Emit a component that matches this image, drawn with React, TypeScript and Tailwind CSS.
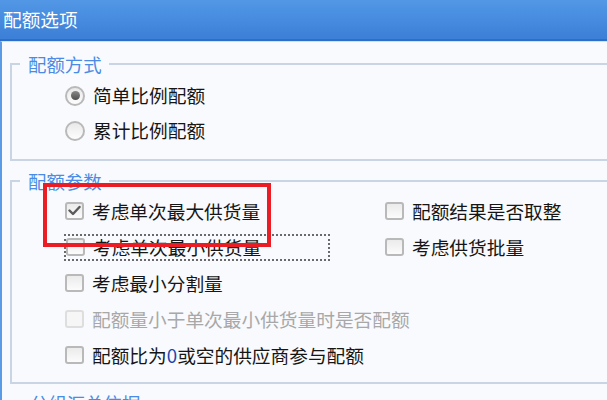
import React from "react";

const FONT = { fontFamily: '"Microsoft YaHei", "Noto Sans CJK SC", "Noto Sans", sans-serif' };

function Radio({ checked }: { checked?: boolean }) {
  return (
    <span className="flex h-[20px] w-[20px] shrink-0 items-center justify-center rounded-full border-2 border-[#b9b9b9] bg-gradient-to-b from-[#e9e9e9] to-[#fdfdfd]">
      {checked && (
        <span className="h-[9px] w-[9px] rounded-full bg-gradient-to-b from-[#8a8a8a] to-[#4f4f4f]" />
      )}
    </span>
  );
}

function Check({ checked, disabled }: { checked?: boolean; disabled?: boolean }) {
  return (
    <span
      className={
        disabled
          ? "flex h-[18px] w-[19px] shrink-0 items-center justify-center rounded-[3px] border-2 border-[#dedede] bg-[#f6f6f6]"
          : "flex h-[18px] w-[19px] shrink-0 items-center justify-center rounded-[3px] border-2 border-[#b9b9b9] bg-gradient-to-b from-[#ebebeb] to-[#fbfbfb]"
      }
    >
      {checked && (
        <svg width="13" height="11" viewBox="0 0 13 11">
          <path d="M1.5 5.5 L5 9 L11.5 2" fill="none" stroke="#5a5a5a" strokeWidth="2.4" strokeLinecap="round" strokeLinejoin="round" />
        </svg>
      )}
    </span>
  );
}

function Item({
  label,
  checked,
  disabled,
  radio,
}: {
  label: React.ReactNode;
  checked?: boolean;
  disabled?: boolean;
  radio?: boolean;
}) {
  return (
    <div className="flex items-center gap-[8px]">
      {radio ? <Radio checked={checked} /> : <Check checked={checked} disabled={disabled} />}
      <span className={disabled ? "text-[18.7px] leading-none text-[#a8a8a8]" : "text-[18.7px] leading-none text-[#161616]"}>
        {label}
      </span>
    </div>
  );
}

function Legend({ children }: { children: React.ReactNode }) {
  return (
    <legend className="ml-[8px] pl-[8px] pr-[7px] text-[18.4px] leading-[20px] text-[#4a8be6]">{children}</legend>
  );
}

export default function App() {
  return (
    <div className="relative h-[400px] w-[607px] overflow-hidden bg-[#f8fafd]" style={FONT}>
      <div className="flex h-[41px] items-center border-b-2 border-[#2c6fca] bg-gradient-to-b from-[#5298e6] to-[#3b7fd7] pl-[3px]">
        <span className="text-[18.7px] leading-none text-white">配额选项</span>
      </div>
      <div className="flex flex-col border-l-2 border-t border-[#5b9be6] border-t-[#cfe0f5] pl-[8px]">
        <fieldset className="mt-[12px] w-[640px] border-2 border-[#c9d5e4] pb-[11px] pt-[4px]">
          <Legend>配额方式</Legend>
          <div className="pl-[53px]">
            <div className="flex h-[35px] items-center">
              <Item radio checked label="简单比例配额" />
            </div>
            <div className="flex h-[35px] items-center">
              <Item radio label="累计比例配额" />
            </div>
          </div>
        </fieldset>
        <fieldset className="mt-[10px] w-[640px] border-2 border-[#c9d5e4] pb-[9px] pt-[2px]">
          <Legend>配额参数</Legend>
          <div className="pl-[52px]">
            <div className="grid grid-cols-[321px_1fr]">
              <div className="flex h-[36px] items-center pl-[1px]">
                <Item checked label="考虑单次最大供货量" />
              </div>
              <div className="flex h-[36px] items-center">
                <Item label="配额结果是否取整" />
              </div>
              <div className="flex h-[36px] items-center">
                <div className="flex h-[27px] w-[266px] items-center border-2 border-dotted border-[#6a6a6a]">
                  <Item label="考虑单次最小供货量" />
                </div>
              </div>
              <div className="flex h-[36px] items-center">
                <Item label="考虑供货批量" />
              </div>
            </div>
            <div className="flex h-[36px] items-center pl-[1px]">
              <Item label="考虑最小分割量" />
            </div>
            <div className="flex h-[36px] items-center pl-[1px]">
              <Item disabled label="配额量小于单次最小供货量时是否配额" />
            </div>
            <div className="flex h-[36px] items-center pl-[1px]">
              <Item
                label={
                  <>
                    配额比为<span className="text-[#1f47b0]">0</span>或空的供应商参与配额
                  </>
                }
              />
            </div>
          </div>
        </fieldset>
        <fieldset className="mt-[9px] w-[640px] border-2 border-[#c9d5e4] pt-[4px]">
          <legend className="ml-[10px] pl-[8px] pr-[7px] text-[18.4px] leading-[20px] text-[#4a8be6]">分组汇总依据</legend>
          <div className="h-[40px]" />
        </fieldset>
      </div>
      <div className="absolute left-[43px] top-[183px] h-[64px] w-[228px] border-4 border-[#ec1c24]" />
    </div>
  );
}
